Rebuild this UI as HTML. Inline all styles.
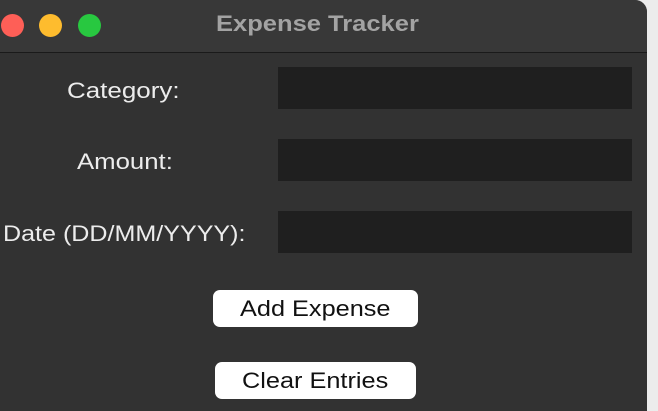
<!DOCTYPE html>
<html><head><style>
body{margin:0;width:658px;height:411px;background:#ececec;position:relative;overflow:hidden;font-family:"Liberation Sans",sans-serif}
.win{position:absolute;left:0;top:0;width:647px;height:411px;background:#323232;border-top-right-radius:12px;overflow:hidden}
.tb{position:absolute;left:0;top:0;width:647px;height:52px;background:#383838;border-bottom:1px solid #1a1a1a}
.c{position:absolute;top:14px;width:23px;height:23px;border-radius:50%}
.t{position:absolute;left:216px;top:11px;color:#a3a3a3;font-weight:bold;font-size:22px;transform:scaleX(1.16);transform-origin:left;white-space:nowrap}
.l{position:absolute;color:#ececec;font-size:22px;line-height:26px;transform-origin:left;white-space:nowrap}
.e{position:absolute;left:278px;width:354px;height:42px;background:#1f1f1f}
.b{position:absolute;background:#fff;border-radius:7px;height:37px}
.b span{position:absolute;top:6px;color:#111;font-size:22px;line-height:26px;transform:scaleX(1.15);transform-origin:left;white-space:nowrap}
</style></head><body>
<div class="win">
<div class="tb">
<div class="c" style="left:1px;background:#fe5f57"></div>
<div class="c" style="left:39px;background:#febc2e"></div>
<div class="c" style="left:78px;background:#28c840"></div>
<div class="t">Expense Tracker</div>
</div>
<div class="l" style="left:67px;top:78px;transform:scaleX(1.18)">Category:</div>
<div class="e" style="top:67px"></div>
<div class="l" style="left:77px;top:149px;transform:scaleX(1.17)">Amount:</div>
<div class="e" style="top:139px"></div>
<div class="l" style="left:3px;top:221px;transform:scaleX(1.14)">Date (DD/MM/YYYY):</div>
<div class="e" style="top:211px"></div>
<div class="b" style="left:213px;top:290px;width:205px"><span style="left:27px">Add Expense</span></div>
<div class="b" style="left:215px;top:362px;width:201px"><span style="left:27px">Clear Entries</span></div>
</div>
</body></html>
